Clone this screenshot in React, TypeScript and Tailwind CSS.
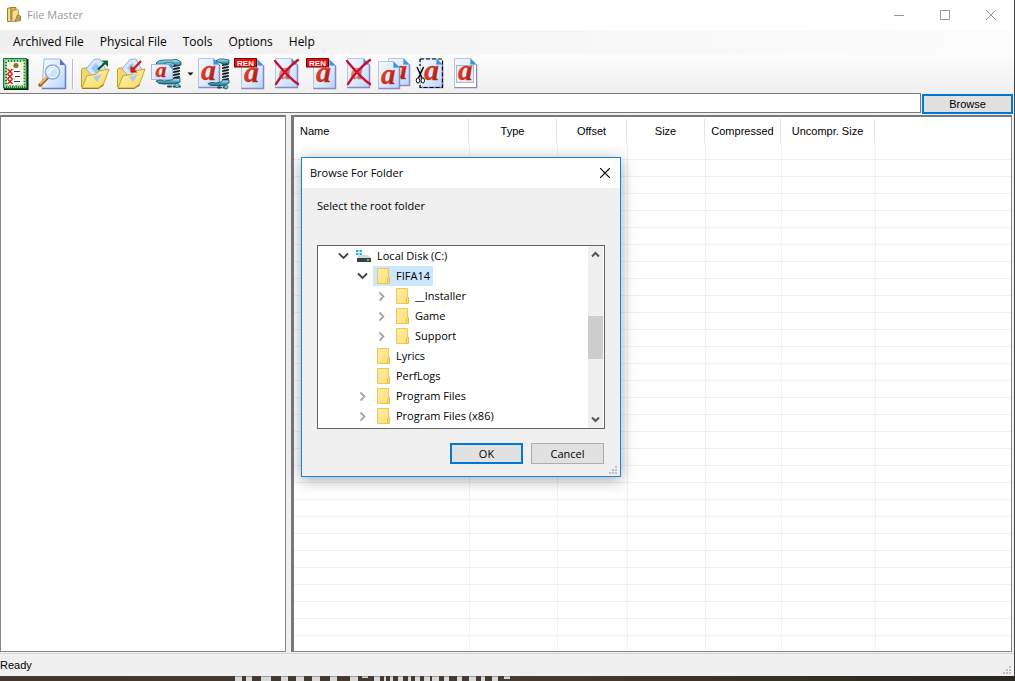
import React from "react";

const UI = "font-['Open_Sans','Noto_Sans',sans-serif]";
const SANS = "font-['Liberation_Sans',Arial,sans-serif]";

function Defs() {
  return (
    <svg className="absolute h-0 w-0" aria-hidden="true">
      <defs>
        <linearGradient id="page" x1="0" y1="0" x2="1" y2="1">
          <stop offset="0" stopColor="#f4f8ff" />
          <stop offset="0.55" stopColor="#dcebfd" />
          <stop offset="1" stopColor="#b4d6fa" />
        </linearGradient>
        <linearGradient id="letter" x1="0" y1="0" x2="1" y2="1">
          <stop offset="0" stopColor="#f0501e" />
          <stop offset="0.5" stopColor="#d8321a" />
          <stop offset="1" stopColor="#8c1010" />
        </linearGradient>
        <linearGradient id="folder" x1="0" y1="0" x2="1" y2="1">
          <stop offset="0" stopColor="#fff7b8" />
          <stop offset="1" stopColor="#f9d95c" />
        </linearGradient>
        <linearGradient id="teal" x1="0" y1="0" x2="0" y2="1">
          <stop offset="0" stopColor="#c4f4f8" />
          <stop offset="0.45" stopColor="#5ab8ca" />
          <stop offset="1" stopColor="#1a6880" />
        </linearGradient>
        <linearGradient id="yellow" x1="0" y1="0" x2="1" y2="1">
          <stop offset="0" stopColor="#ffeda5" />
          <stop offset="1" stopColor="#fddf7c" />
        </linearGradient>
      </defs>
    </svg>
  );
}

function Page({ x, y, w, h }: { x: number; y: number; w: number; h: number }) {
  const r = x + w;
  const b = y + h;
  return (
    <g>
      <path d={`M${x} ${y}H${r - 6}L${r} ${y + 6}V${b}H${x}Z`} fill="url(#page)" stroke="#b9c4ec" />
      <path d={`M${r} ${y + 6}V${b}H${x}`} fill="none" stroke="#8d88c4" strokeWidth="1.5" />
      <path d={`M${r - 6} ${y}V${y + 6}H${r}Z`} fill="#3f93dc" stroke="#6fb2ea" strokeWidth="0.6" />
    </g>
  );
}

function Letter({ x, y, size }: { x: number; y: number; size: number }) {
  return (
    <text
      x={x}
      y={y}
      fontSize={size}
      fontWeight="bold"
      fontStyle="italic"
      fontFamily="Liberation Serif, serif"
      fill="url(#letter)"
      stroke="#d0341a"
      strokeWidth="0.3"
    >
      a
    </text>
  );
}

function Icon({ children }: { children: React.ReactNode }) {
  return (
    <svg viewBox="0 0 32 32" className="h-8 w-8 shrink-0 overflow-visible" aria-hidden="true">
      {children}
    </svg>
  );
}

function Cross() {
  return (
    <g fill="none" stroke="#c8102e" strokeLinecap="round">
      <path d="M5 3C11 10 19 20 28 26" strokeWidth="2.4" />
      <path d="M28 2C20 8 12 16 6 26" strokeWidth="2.4" />
    </g>
  );
}

function ListIcon() {
  return (
    <Icon>
      <rect x="4" y="1" width="24.5" height="31" fill="#06200a" />
      <rect x="3" y="0" width="24" height="30.5" fill="#11822b" />
      <rect x="4.5" y="1.5" width="21" height="27.5" fill="none" stroke="#fff" strokeWidth="1" strokeDasharray="1 1" />
      <rect x="6" y="3" width="18" height="24.5" fill="none" stroke="#dff0dc" strokeWidth="1.4" strokeDasharray="2 1" />
      <rect x="7" y="4" width="16.500" height="23" fill="#fffdee" />
      <circle cx="16" cy="7.5" r="2.6" fill="#77783a" />
      <path d="M7.500 11l5 5m0-5l-5 5M7.500 16l5 5m0-5l-5 5M7.500 21l5 5m0-5l-5 5" stroke="#dc1414" strokeWidth="1.4" />
      <path d="M14 13.5h6M15 18.5h5M14 23.5h6" stroke="#2430a8" strokeWidth="1.2" />
      <path d="M9 6h1M21 6h1M21 11h1M13 11h1M21 16h1M14 21h1M21 21h1M18 26h1" stroke="#f4d83c" strokeWidth="1.4" />
    </Icon>
  );
}

function SearchIcon() {
  return (
    <Icon>
      <path d="M8 1H24L29.5 7V30.5H6Z" fill="url(#page)" stroke="#a3b8ea" />
      <path d="M29.5 7V30.5H6" fill="none" stroke="#6a7cc4" strokeWidth="1.5" />
      <path d="M24 1V7H29.5Z" fill="#5873c6" />
      <path d="M11 20L4 27" stroke="#9b6424" strokeWidth="3.6" strokeLinecap="round" />
      <path d="M11 19L4.5 25.5" stroke="#f2b55a" strokeWidth="2" strokeLinecap="round" />
      <circle cx="16.5" cy="14" r="7" fill="#c5e5fb" stroke="#8fabdc" strokeWidth="1.6" />
      <circle cx="16.5" cy="14" r="5.7" fill="none" stroke="#fff" strokeWidth="1" />
      <path d="M12 15q1-6 7-5-4 1-5 6z" fill="#fff" />
    </Icon>
  );
}

function FolderIcon({ out }: { out: boolean }) {
  return (
    <Icon>
      <path d="M3.5 29V11.5L5 10H10L12 12H25V28Z" fill="#f6d868" stroke="#c79a2c" />
      <path d="M8 11L16 1.5L22 1L28 12L19 23Z" fill="#d8e8fc" stroke="#8eb0e6" />
      <path d="M13 10L18 5L23 11L18 16Z" fill="#9cc6f5" />
      <path d="M4 30L9 17.5L18 16.500L21 13L31 11L25.5 26L20 30Z" fill="url(#folder)" stroke="#caa032" />
      <path d="M15 19L24 16L19 24Z" fill="#a9cdf0" />
      <path d="M4 30.5H20.500L25.5 27" fill="none" stroke="#9c7b2a" />
      {out ? (
        <g>
          <path d="M20 11.500L28 4" stroke="#0a5c20" strokeWidth="2.2" />
          <path d="M23.500 2.500H30V9Z" fill="#0a6a24" />
        </g>
      ) : (
        <g>
          <path d="M27 3L19 11.500" stroke="#d81414" strokeWidth="2.2" />
          <path d="M16.500 7.500V14.500H23.500Z" fill="#e01212" />
        </g>
      )}
    </Icon>
  );
}

function Screw({ x, top, bottom }: { x: number; top: number; bottom: number }) {
  const threads = Array.from({ length: Math.floor((bottom - top) / 3) }, (_, i) => top + i * 3);
  return (
    <g>
      <rect x={x + 1} y={top} width="5" height={bottom - top} fill="#a9babf" />
      {threads.map((t) => (
        <path key={t} d={`M${x} ${t + 2.2}L${x + 7} ${t + 0.8}`} stroke="#10181b" strokeWidth="1.5" />
      ))}
    </g>
  );
}

function CompressIcon() {
  return (
    <Icon>
      <Screw x={23} top={6} bottom={22} />
      <path d="M6 5Q9 1.5 14 2H22L24 1.500H27L31 4V7L27 8L22 5H16L13 7H8Z" fill="url(#teal)" stroke="#124a5c" strokeWidth="0.8" />
      <rect x="1.5" y="6.5" width="21" height="15" fill="url(#page)" stroke="#a9b6e4" />
      <path d="M18 6.500h4.500v5z" fill="#3f93dc" />
      <Letter x={5.5} y={19} size={22} />
      <path d="M6 23Q10 21 14 23L22 22L24 20.500H30V24L24 26H13Q8 26 6 23Z" fill="url(#teal)" stroke="#124a5c" strokeWidth="0.8" />
      <path d="M18 28.500H30" stroke="#124a5c" strokeWidth="2" strokeLinecap="round" strokeDasharray="3 2.500" />
      <circle cx="27" cy="27.500" r="2.200" fill="#6cc4d4" stroke="#124a5c" strokeWidth="0.7" />
    </Icon>
  );
}

function CompressPageIcon() {
  return (
    <Icon>
      <Page x={0.5} y={0.5} w={21} h={29} />
      <Letter x={3} y={22} size={30} />
      <Screw x={24} top={5} bottom={23} />
      <path d="M18 3Q21 0 25 1L31 2V5L27 6.500L21 4.500Z" fill="url(#teal)" stroke="#124a5c" strokeWidth="0.8" />
      <path d="M10 25.500Q14 23.500 18 25L23 24L25 22H31V25L26 27.500H14Q11 27.500 10 25.500Z" fill="url(#teal)" stroke="#124a5c" strokeWidth="0.8" />
      <path d="M20 29.500H31" stroke="#124a5c" strokeWidth="2" strokeLinecap="round" strokeDasharray="3 2.500" />
      <circle cx="28" cy="29" r="2" fill="#6cc4d4" stroke="#124a5c" strokeWidth="0.7" />
    </Icon>
  );
}

function RenameIcon() {
  return (
    <Icon>
      <Page x={7.5} y={1.5} w={22} h={29} />
      <Letter x={10} y={24} size={30} />
      <rect x="0.5" y="0.5" width="22" height="8.5" fill="#f80808" stroke="#6a0808" />
      <text x="11.5" y="7.500" textAnchor="middle" fontSize="8" fontWeight="bold" fontFamily="Liberation Sans, sans-serif" fill="#fff">
        REN
      </text>
    </Icon>
  );
}

function DeleteIcon() {
  return (
    <Icon>
      <Page x={5.5} y={0.5} w={22} h={29} />
      <g opacity="0.6">
        <Letter x={9} y={21} size={24} />
      </g>
      <Cross />
    </Icon>
  );
}

function CopyIcon() {
  return (
    <Icon>
      <Page x={10.5} y={0.5} w={21} h={27} />
      <Letter x={15} y={21} size={28} />
      <Page x={0.5} y={3.5} w={21} h={27} />
      <Letter x={3} y={26} size={29} />
    </Icon>
  );
}

function CutIcon() {
  return (
    <Icon>
      <Page x={6.5} y={0.5} w={22} h={29} />
      <Letter x={10} y={22} size={30} />
      <path d="M6 1H28.500V29.500H6" fill="none" stroke="#000" strokeWidth="1.200" strokeDasharray="4 2" />
      <path d="M6 1V8M6 27V30" stroke="#000" strokeWidth="1.200" strokeDasharray="3 2" />
      <path d="M3 9L8 20M9.500 9L4.500 20" stroke="#000" strokeWidth="1.500" />
      <ellipse cx="4" cy="22.500" rx="1.700" ry="2.600" fill="#fff" stroke="#000" />
      <ellipse cx="8.800" cy="22.500" rx="1.700" ry="2.600" fill="#fff" stroke="#000" />
    </Icon>
  );
}

function PreviewIcon() {
  return (
    <Icon>
      <Page x={4.5} y={0.5} w={22} h={29} />
      <path d="M5 7H26V29H5Z" fill="#fff" />
      <rect x="6.5" y="7.5" width="17" height="17" fill="#e0edfc" stroke="#b4b8c4" />
      <Letter x={8} y={22} size={29} />
    </Icon>
  );
}

const firstTools = [
  { label: "File list", icon: <ListIcon /> },
  { label: "Search", icon: <SearchIcon /> },
];
const archiveTools = [
  { label: "Export", icon: <FolderIcon out /> },
  { label: "Import", icon: <FolderIcon out={false} /> },
  { label: "Compress", icon: <CompressIcon /> },
];
const fileTools = [
  { label: "Compress file", icon: <CompressPageIcon /> },
  { label: "Rename archived file", icon: <RenameIcon /> },
  { label: "Delete archived file", icon: <DeleteIcon /> },
  { label: "Rename file", icon: <RenameIcon /> },
  { label: "Delete file", icon: <DeleteIcon /> },
  { label: "Copy", icon: <CopyIcon /> },
  { label: "Cut", icon: <CutIcon /> },
  { label: "Preview", icon: <PreviewIcon /> },
];

function ToolGroup({ tools }: { tools: { label: string; icon: React.ReactNode }[] }) {
  return (
    <>
      {tools.map((t) => (
        <button key={t.label} type="button" aria-label={t.label} className="shrink-0">
          {t.icon}
        </button>
      ))}
    </>
  );
}

function AppIcon() {
  return (
    <svg viewBox="0 0 16 18" className="h-[18px] w-4" aria-hidden="true">
      <path d="M1.500 2.500L5 1.500V15.500H1.500Z" fill="#f3d98a" stroke="#a07c30" />
      <path d="M5 1.500H10V13H5Z" fill="#e3b650" stroke="#a07c30" />
      <path d="M6 5L10.500 3.500L12.500 4.500V13.500L6 16Z" fill="#f5dc8c" stroke="#a8862f" strokeWidth="0.8" />
      <path d="M11.500 9L14.500 10V14.500L9 15.500Z" fill="#d9a83c" stroke="#8c6c28" strokeWidth="0.8" />
      <path d="M13 10.500v3" stroke="#5f9be0" strokeWidth="1.2" />
    </svg>
  );
}

function TitleBar() {
  return (
    <header className="flex h-[30px] items-center bg-white pl-[6px]">
      <AppIcon />
      <h1 className={`ml-[5px] flex-1 text-[11px] text-[#999] ${UI}`}>File Master</h1>
      <div className="flex text-[#999]">
        <button type="button" aria-label="Minimize" className="flex h-7 w-[46px] items-center justify-center">
          <svg viewBox="0 0 10 10" className="h-[10px] w-[10px]"><path d="M0 5.5H10" stroke="currentColor" /></svg>
        </button>
        <button type="button" aria-label="Maximize" className="flex h-7 w-[46px] items-center justify-center">
          <svg viewBox="0 0 10 10" className="h-[10px] w-[10px]"><path d="M0.5 0.5H9.5V9.5H0.5Z" fill="none" stroke="currentColor" /></svg>
        </button>
        <button type="button" aria-label="Close" className="flex h-7 w-[46px] items-center justify-center">
          <svg viewBox="0 0 10 10" className="h-[10px] w-[10px]"><path d="M0 0L10 10M10 0L0 10" stroke="currentColor" /></svg>
        </button>
      </div>
    </header>
  );
}

const columns = ["Name", "Type", "Offset", "Size", "Compressed", "Uncompr. Size", ""];

function FileTable() {
  return (
    <section className="relative min-w-0 flex-1 overflow-hidden border-t-2 border-r border-b border-l-[3px] border-[#828790] border-t-[#77787c] border-l-[#77787c] bg-white">
      <div className="absolute inset-0 overflow-hidden pt-[2px]">
        <table className={`w-full table-fixed border-separate border-spacing-0 ${SANS}`}>
          <colgroup>
            <col className="w-[175px]" />
            <col className="w-[88px]" />
            <col className="w-[70px]" />
            <col className="w-[78px]" />
            <col className="w-[76px]" />
            <col className="w-[94px]" />
            <col />
          </colgroup>
          <thead>
            <tr className="h-6">
              {columns.map((c, i) => (
                <th
                  key={i}
                  className={`p-0 text-[11px] leading-[16px] font-normal whitespace-nowrap text-black ${
                    i === 0 ? "pl-[6px] text-left" : "text-center"
                  } ${i < 6 ? "border-r border-[#e5e5e5]" : ""}`}
                >
                  {c}
                </th>
              ))}
            </tr>
          </thead>
          <tbody>
            {Array.from({ length: 30 }, (_, r) => (
              <tr key={r} className="h-[17px]">
                {columns.map((_, i) => (
                  <td key={i} className={`border-b border-[#f0f0f0] p-0 ${i > 0 ? "border-l" : ""}`} />
                ))}
              </tr>
            ))}
          </tbody>
        </table>
      </div>
    </section>
  );
}

type Item = { name: string; level: 0 | 1 | 2; state: "open" | "closed" | "leaf"; disk?: boolean; selected?: boolean };

const items: Item[] = [
  { name: "Local Disk (C:)", level: 0, state: "open", disk: true },
  { name: "FIFA14", level: 1, state: "open", selected: true },
  { name: "__Installer", level: 2, state: "closed" },
  { name: "Game", level: 2, state: "closed" },
  { name: "Support", level: 2, state: "closed" },
  { name: "Lyrics", level: 1, state: "leaf" },
  { name: "PerfLogs", level: 1, state: "leaf" },
  { name: "Program Files", level: 1, state: "closed" },
  { name: "Program Files (x86)", level: 1, state: "closed" },
];

const indent = { 0: "pl-[17px]", 1: "pl-[36px]", 2: "pl-[55px]" };

function Chevron({ state }: { state: Item["state"] }) {
  return (
    <svg viewBox="0 0 16 16" className="h-4 w-4 shrink-0" fill="none" aria-hidden="true">
      {state === "open" && <path d="M4 5.500L8.500 10L13 5.500" stroke="#404040" strokeWidth="1.8" />}
      {state === "closed" && <path d="M6.500 4.500L10.500 8.500L6.500 12.500" stroke="#a6a6a6" strokeWidth="1.8" />}
    </svg>
  );
}

function FolderGlyph() {
  return (
    <svg viewBox="0 0 16 18" className="h-[18px] w-4 shrink-0" aria-hidden="true">
      <path d="M3.5 1.500H14.500V16.500H3.5Z" fill="url(#yellow)" stroke="#efc94c" />
      <path d="M13.500 16.500V11.500L14.500 10.500H15.500V16.500Z" fill="#fbe08a" stroke="#e6bd3e" />
    </svg>
  );
}

function DiskGlyph() {
  return (
    <svg viewBox="0 0 16 18" className="h-[18px] w-4 shrink-0" aria-hidden="true">
      <path d="M1 3h2.500v2H1zM4.500 3H7v2H4.500zM1 6h2.500v2H1zM4.500 6H7v2H4.500z" fill="#18b0ee" />
      <path d="M4 8H13L16 11H2Z" fill="#d4d6d8" />
      <path d="M2 11H16V15H2Z" fill="#3b3f44" />
      <path d="M12 12h2v2h-2z" fill="#35e05a" />
    </svg>
  );
}

function TreeBox() {
  return (
    <div className="flex border border-[#646464] bg-white pr-px">
      <ul role="tree" aria-label="Folders" className="min-w-0 flex-1 pb-[2px]">
        {items.map((it) => (
          <li
            key={it.name}
            role="treeitem"
            aria-selected={!!it.selected}
            className={`flex h-5 items-center ${indent[it.level]}`}
          >
            <Chevron state={it.state} />
            <span className={`ml-[3px] flex h-5 items-center pr-[3px] pl-px ${it.selected ? "bg-[#cce8ff]" : ""}`}>
              {it.disk ? <DiskGlyph /> : <FolderGlyph />}
              <span className="ml-[6px] leading-5 whitespace-nowrap">{it.name}</span>
            </span>
          </li>
        ))}
      </ul>
      <div className="flex w-[15px] flex-col items-center bg-[#f0f0f0]">
        <button type="button" aria-label="Scroll up" className="flex h-[17px] items-center">
          <svg viewBox="0 0 9 7" className="h-[7px] w-[9px]"><path d="M1 5.500L4.500 2L8 5.500" fill="none" stroke="#555" strokeWidth="2" /></svg>
        </button>
        <div className="flex w-full flex-1 flex-col">
          <div className="flex-[53]" />
          <div className="h-[43px] bg-[#cdcdcd]" />
          <div className="flex-[52]" />
        </div>
        <button type="button" aria-label="Scroll down" className="flex h-[17px] items-center">
          <svg viewBox="0 0 9 7" className="h-[7px] w-[9px]"><path d="M1 1.500L4.500 5L8 1.500" fill="none" stroke="#555" strokeWidth="2" /></svg>
        </button>
      </div>
    </div>
  );
}

function Grip() {
  return (
    <svg viewBox="0 0 8 8" className="h-2 w-2" aria-hidden="true">
      <path d="M6 0h2v2H6zM3 3h2v2H3zM6 3h2v2H6zM0 6h2v2H0zM3 6h2v2H3zM6 6h2v2H6z" fill="#bfbfbf" />
    </svg>
  );
}

function FolderDialog() {
  return (
    <div
      role="dialog"
      aria-labelledby="dialog-title"
      className={`absolute top-[157px] left-[301px] w-80 border border-[#1883d7] bg-[#f0f0f0] text-[11px] text-black shadow-[0_3px_14px_rgba(0,0,0,0.35)] ${UI}`}
    >
      <div className="flex h-[30px] items-center justify-between bg-white pr-[10px] pl-2">
        <h2 id="dialog-title">Browse For Folder</h2>
        <button type="button" aria-label="Close dialog">
          <svg viewBox="0 0 10 10" className="h-[10px] w-[10px]"><path d="M0 0L10 10M10 0L0 10" stroke="#000" strokeWidth="1.200" /></svg>
        </button>
      </div>
      <div className="px-[15px] pt-2">
        <p className="h-[49px] leading-5">Select the root folder</p>
        <TreeBox />
        <div className="flex justify-end gap-2 pt-[14px] pr-px pb-3">
          <button type="button" className="h-[21px] w-[73px] border-2 border-[#0078d7] bg-[#e1e1e1] leading-4">OK</button>
          <button type="button" className="h-[21px] w-[73px] border border-[#adadad] bg-[#e1e1e1] leading-4">Cancel</button>
        </div>
      </div>
      <div className="absolute right-[3px] bottom-[2px]">
        <Grip />
      </div>
    </div>
  );
}

const marks = [
  [35, 7], [46, 6], [61, 10], [81, 7], [96, 8], [112, 8], [130, 7], [150, 8], [174, 6], [184, 2], [190, 3],
  [198, 5], [208, 3], [215, 5], [224, 6], [232, 7], [244, 5], [257, 5], [269, 7], [281, 4], [292, 6],
];

function Backdrop() {
  return (
    <div className="h-[5px] shrink-0 overflow-hidden bg-linear-to-r from-[#40362f] via-[#463b32] to-[#29251f]">
      <svg className="h-[5px] w-[600px]" viewBox="0 0 600 5" aria-hidden="true">
        {marks.map(([x, w]) => (
          <rect key={x} x={200 + x} y="0" width={w} height="5" fill="#d9d9d7" />
        ))}
        <path d="M362 0h6v2h-6zM504 0h6v3h-6z" fill="#d9d9d7" />
        <path d="M0 0.500H600" stroke="#4a4540" strokeOpacity="0.400" />
      </svg>
    </div>
  );
}

export default function App() {
  return (
    <div className="relative flex h-screen flex-col overflow-hidden bg-[#f0f0f0] text-black">
      <Defs />
      <div className="flex min-h-0 flex-1 flex-col border-r border-[#444]">
        <TitleBar />
        <nav className={`flex h-6 items-center gap-4 bg-linear-to-r from-[#f0f0f0] to-[#fcfcfc] pl-[13px] text-[12px] ${UI}`}>
          {["Archived File", "Physical File", "Tools", "Options", "Help"].map((m) => (
            <button key={m} type="button" className="whitespace-nowrap">{m}</button>
          ))}
        </nav>
        <div role="toolbar" aria-label="Main" className="flex h-[39px] items-center gap-1 bg-linear-to-b from-[#fcfcfc] to-[#f0f0f0]">
          <ToolGroup tools={firstTools} />
          <div className="h-[30px] w-[2px] border-r border-white bg-[#bdbdbd]" />
          <ToolGroup tools={archiveTools} />
          <button type="button" aria-label="Compress options" className="w-2">
            <svg viewBox="0 0 8 4" className="h-1 w-2"><path d="M1.500 0.500H7.500L4.500 3.500Z" fill="#000" /></svg>
          </button>
          <ToolGroup tools={fileTools} />
        </div>
        <div className="flex h-[22px] gap-px pr-px">
          <input type="text" aria-label="Folder path" className={`h-5 min-w-0 flex-1 border border-l-0 border-[#7a7a7a] bg-white px-1 text-[11px] outline-none ${SANS}`} />
          <button type="button" className={`mt-px h-5 w-[91px] border-2 border-[#0078d7] bg-[#e1e1e1] text-[11px] leading-4 ${SANS}`}>
            Browse
          </button>
        </div>
        <main className="flex min-h-0 flex-1 gap-[5px] pr-[2px]">
          <section aria-label="Archives" className="w-[286px] shrink-0 border border-t-2 border-[#828790] border-t-[#77787c] bg-white" />
          <FileTable />
        </main>
        <footer className={`mt-px flex h-[23px] shrink-0 items-center justify-between border-t border-[#d7d7d7] pt-px pr-[3px] text-[11px] ${SANS}`}>
          <span>Ready</span>
          <span className="self-end pb-[2px]">
            <Grip />
          </span>
        </footer>
      </div>
      <Backdrop />
      <FolderDialog />
    </div>
  );
}
